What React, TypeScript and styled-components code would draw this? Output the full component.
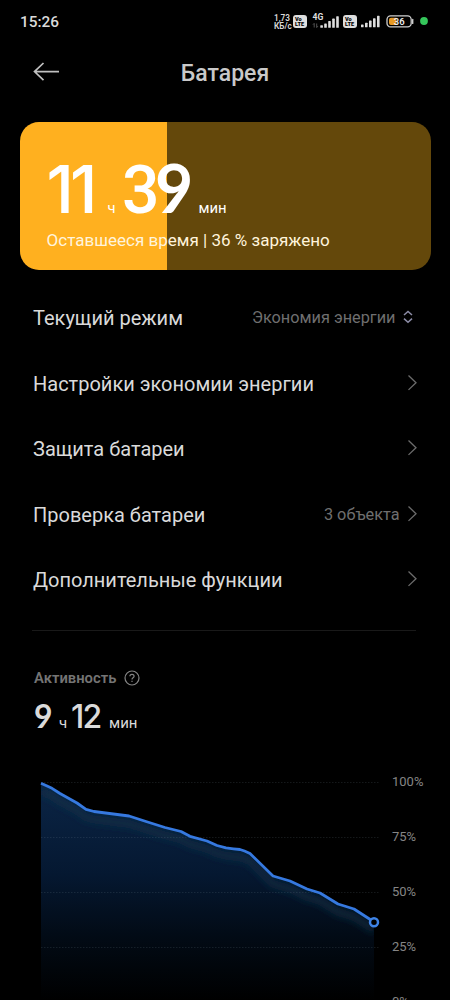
import React from 'react';
import styled, { createGlobalStyle } from 'styled-components';

const GlobalStyle = createGlobalStyle`
  * { box-sizing: border-box; }
  html, body { margin: 0; background: #000; }
  body { font-family: Roboto, 'Noto Sans', sans-serif; overflow: hidden; }
  svg { display: block; flex: none; }
`;

const Screen = styled.main`
  width: 450px;
  height: 1000px;
  overflow: hidden;
  background: #000;
  color: #dadada;
`;

const StatusBar = styled.div`
  display: flex;
  align-items: center;
  height: 43px;
  padding: 0 22px 0 20px;
`;

const Clock = styled.span`
  font-size: 15.4px;
  font-weight: 500;
  line-height: 20px;
  margin-right: auto;
`;

const Speed = styled.span`
  display: flex;
  flex-direction: column;
  width: 17px;
  margin-right: 2px;
  font-size: 8.2px;
  font-weight: 600;
  line-height: 8px;
  white-space: nowrap;
`;

const VolteBadge = styled.span`
  display: flex;
  flex-direction: column;
  justify-content: center;
  width: 14px;
  height: 13px;
  padding-left: 2px;
  border-radius: 3px;
  background: #dedede;
  color: #000;
  font-size: 5.6px;
  font-weight: 900;
  line-height: 5px;
`;

const Header = styled.header`
  display: grid;
  grid-template-columns: 32px 1fr 32px;
  align-items: center;
  height: 59px;
  padding: 0 31px;
`;

const BackIcon = styled.svg`
  margin-bottom: 2px;
`;

const Title = styled.h1`
  margin: 2px 0 0;
  text-align: center;
  font-size: 23px;
  font-weight: 500;
  line-height: 30px;
  color: #c9c9c9;
`;

const BatteryCard = styled.section`
  width: 411px;
  height: 148px;
  margin: 20px 0 0 19.5px;
  padding: 32px 0 0 27px;
  border-radius: 19px;
  background: linear-gradient(90deg, #ffb01f 147.5px, #64480b 147.5px);
  color: #fff;
`;

const Duration = styled.div<{ $height: number }>`
  display: flex;
  align-items: baseline;
  height: ${(p) => p.$height}px;
  line-height: ${(p) => p.$height}px;
  white-space: nowrap;
`;

const Digits = styled.span<{ $size: number; $width: number; $tracking: number; $weight: number }>`
  width: ${(p) => p.$width}px;
  font-family: Inter, sans-serif;
  font-size: ${(p) => p.$size}px;
  font-weight: ${(p) => p.$weight};
  letter-spacing: ${(p) => p.$tracking}px;
`;

const Three = styled.span`
  font-family: Roboto, sans-serif;
  font-weight: 500;
  line-height: 0;
`;

const Nine = styled.span`
  font-family: Lato, sans-serif;
  font-weight: 700;
  line-height: 0;
`;

const Unit = styled.span<{ $width: number; $size: number }>`
  width: ${(p) => p.$width}px;
  font-size: ${(p) => p.$size}px;
  font-weight: 400;
`;

const Remaining = styled.div`
  margin-top: 5px;
  font-size: 17.05px;
  line-height: 22px;
  color: #fff4dc;
  white-space: nowrap;
`;

const Settings = styled.div`
  padding: 15.4px 32px 0 33px;
`;

const SettingRow = styled.div`
  display: flex;
  align-items: center;
  height: 65.5px;
`;

const Label = styled.span`
  margin-right: auto;
  font-size: 20px;
  line-height: 28px;
  white-space: nowrap;
`;

const Value = styled.span<{ $gap: number }>`
  margin-right: ${(p) => p.$gap}px;
  font-size: 16.3px;
  line-height: 22px;
  color: #6f6f6f;
  white-space: nowrap;
`;

const Divider = styled.hr`
  height: 1px;
  margin: 17.1px 34px 0 32px;
  border: 0;
  background: #191919;
`;

const Activity = styled.section`
  padding: 37px 0 0 34px;
`;

const ActivityHeading = styled.div`
  display: flex;
  align-items: center;
  gap: 8px;
  height: 20px;
  margin-bottom: 14px;
  font-size: 14.8px;
  font-weight: 600;
  color: #747474;
`;

const ChartArea = styled.div`
  display: flex;
  height: 240px;
  margin-top: 42px;
`;

const Scale = styled.div`
  display: flex;
  flex-direction: column;
  padding-left: 8px;
  font-size: 13px;
  line-height: 55px;
  color: #858585;
  margin-top: -20px;
`;

const ScaleLabel = styled.span`
  height: 55px;
  flex: none;
`;

const SignalBars = () => (
  <svg width="20" height="13" viewBox="0 0 20 13" fill="#dedede">
    <rect x="0" y="9.5" width="2.6" height="2.8" rx=".6" />
    <rect x="4" y="7.7" width="2.6" height="4.6" rx=".6" />
    <rect x="8" y="5.6" width="2.6" height="6.7" rx=".6" />
    <rect x="12" y="3.3" width="2.6" height="9" rx=".6" />
    <rect x="16" y="0.8" width="2.6" height="11.5" rx=".6" />
  </svg>
);

const MobileNetwork = () => (
  <svg width="31" height="17" viewBox="0 0 31 17" fill="#dedede">
    <text x="0.5" y="7.2" fontFamily="Roboto" fontSize="8.6" fontWeight="700">4G</text>
    <path d="M2.2 14.5v-4M1 11.6l1.2-1.3M4.7 10.5v4M5.9 13.2l-1.2 1.3" stroke="#686868" strokeWidth=".8" fill="none" />
    <rect x="8.3" y="12.2" width="2.6" height="2.6" rx=".6" />
    <rect x="12.2" y="10.4" width="2.6" height="4.4" rx=".6" />
    <rect x="16.2" y="8" width="2.6" height="6.8" rx=".6" />
    <rect x="20.2" y="5.6" width="2.6" height="9.2" rx=".6" />
    <rect x="24.2" y="3.2" width="2.6" height="11.6" rx=".6" />
  </svg>
);

const BatteryIcon = () => (
  <svg width="29" height="13" viewBox="0 0 29 13">
    <rect x="1" y=".9" width="24.2" height="11" rx="3.6" fill="none" stroke="#cfcfcf" strokeWidth="1.3" />
    <path d="M5 2.7h5.5v7.4H5a2 2 0 0 1-2-2V4.7a2 2 0 0 1 2-2z" fill="#e79a25" />
    <path d="M26.7 4.4v4" stroke="#cfcfcf" strokeWidth="1.4" strokeLinecap="round" />
    <text x="7.8" y="9.7" fontFamily="Roboto" fontSize="9.4" fontWeight="600" fill="#eee">36</text>
  </svg>
);

const Volte = () => (
  <VolteBadge>
    <span>Vo</span>
    <span>LTE</span>
  </VolteBadge>
);

const IconSlot = styled.span<{ $left?: number; $right?: number; $bottom?: number }>`
  display: flex;
  margin-left: ${(p) => p.$left ?? 0}px;
  margin-right: ${(p) => p.$right ?? 0}px;
  padding-bottom: ${(p) => p.$bottom ?? 0}px;
`;

const Chevron = () => (
  <svg width="12" height="18" viewBox="0 0 12 18" fill="none" stroke="#6c6c6c" strokeWidth="1.3">
    <path d="M2.5 1.5l7.5 7.2-7.5 7.2" />
  </svg>
);

const UpDown = () => (
  <svg width="10" height="14" viewBox="0 0 10 14" fill="none" stroke="#8c8ca6" strokeWidth="1.5">
    <path d="M1 5l4-3.6L9 5M1 8.6l4 3.6 4-3.6" />
  </svg>
);

const LINE =
  'M7 9.3L18 14.3 26 19.5 43 29 52 35.3 60 37.5 95 42 112 47.5 131 53.5 147 57.5 156 62.3 173 67 183 71.5 192 73.8Q200 75 206 75.5 210 76.5 216 79.5L239 102 256 107 273 115 286 119 304 130 320 135 337 146 340 148.5';

const Chart = () => (
  <svg width="350" height="240" viewBox="0 0 350 240" fill="none">
    <defs>
      <linearGradient id="area" x1="0" y1="9" x2="0" y2="226" gradientUnits="userSpaceOnUse">
        <stop offset="0" stopColor="#0b2546" />
        <stop offset=".42" stopColor="#051831" />
        <stop offset=".7" stopColor="#020b16" />
        <stop offset="1" stopColor="#000" />
      </linearGradient>
      <clipPath id="below">
        <path d={`${LINE}V240H7z`} />
      </clipPath>
      <filter id="soft" x="-10%" y="-20%" width="120%" height="150%">
        <feGaussianBlur stdDeviation="3.5" />
      </filter>
    </defs>
    <path d={`${LINE}V240H7z`} fill="url(#area)" />
    <g clipPath="url(#below)">
      <path d={LINE} transform="translate(0 8)" stroke="#10304a" strokeOpacity=".6" strokeWidth="8" filter="url(#soft)" />
    </g>
    {[9, 64, 119, 174].map((y) => (
      <path key={y} d={`M7 ${y - 0.5}H345`} stroke="#8ba0b0" strokeOpacity=".15" strokeDasharray="1.5 1.5" />
    ))}
    <path d={LINE} stroke="#3679e0" strokeWidth="2.8" strokeLinejoin="round" />
    <circle cx="340" cy="148.3" r="4" fill="#000" stroke="#3e83e6" strokeWidth="2.5" />
  </svg>
);

const rows: { label: string; value?: string }[] = [
  { label: 'Настройки экономии энергии' },
  { label: 'Защита батареи' },
  { label: 'Проверка батареи', value: '3 объекта' },
  { label: 'Дополнительные функции' },
];

export default function App() {
  return (
    <Screen>
      <GlobalStyle />
      <StatusBar>
        <Clock>15:26</Clock>
        <Speed>
          <span>1,73</span>
          <span>КБ/с</span>
        </Speed>
        <Volte />
        <IconSlot $left={5} $bottom={1}>
          <MobileNetwork />
        </IconSlot>
        <Volte />
        <IconSlot $left={4}>
          <SignalBars />
        </IconSlot>
        <IconSlot $left={5}>
          <BatteryIcon />
        </IconSlot>
        <IconSlot $left={5} $bottom={1}>
          <svg width="8" height="8" viewBox="0 0 8 8">
            <circle cx="4" cy="4" r="3.9" fill="#35c65b" />
          </svg>
        </IconSlot>
      </StatusBar>

      <Header>
        <BackIcon width="32" height="20" viewBox="0 0 32 20" fill="none" stroke="#c0c0c0" strokeWidth="1.7">
          <path d="M12.5 1L3.5 9.6l9 8.6M3.5 9.6H28" />
        </BackIcon>
        <Title>Батарея</Title>
      </Header>

      <BatteryCard>
        <Duration $height={70}>
          <Digits $size={66} $width={61} $tracking={-4} $weight={550}>11</Digits>
          <Unit $width={14.5} $size={14.8}>ч</Unit>
          <Digits $size={66} $width={76.5} $tracking={-4.5} $weight={500}>
            <Three>3</Three>
            <Nine>9</Nine>
          </Digits>
          <Unit $width={30} $size={14.8}>мин</Unit>
        </Duration>
        <Remaining>Оставшееся время | 36 % заряжено</Remaining>
      </BatteryCard>

      <Settings>
        <SettingRow>
          <Label>Текущий режим</Label>
          <Value $gap={7.5}>Экономия энергии</Value>
          <IconSlot $right={5} $bottom={2}>
            <UpDown />
          </IconSlot>
        </SettingRow>
        {rows.map((row) => (
          <SettingRow key={row.label}>
            <Label>{row.label}</Label>
            {row.value && <Value $gap={6.5}>{row.value}</Value>}
            <IconSlot $bottom={2}>
              <Chevron />
            </IconSlot>
          </SettingRow>
        ))}
      </Settings>

      <Divider />

      <Activity>
        <ActivityHeading>
          <span>Активность</span>
          <svg width="16" height="16" viewBox="0 0 16 16" fill="none" stroke="#858585" strokeWidth="1.2">
            <circle cx="8" cy="8" r="7" />
            <path d="M5.9 6.3c0-2.7 4.2-2.7 4.2 0 0 1.5-2.1 1.5-2.1 3.1M8 10.8v1.3" />
          </svg>
        </ActivityHeading>
        <Duration $height={30}>
          <Digits $size={32} $width={25} $tracking={-2} $weight={500}>
            <Nine>9</Nine>
          </Digits>
          <Unit $width={12} $size={15}>ч</Unit>
          <Digits $size={32} $width={38} $tracking={-1.7} $weight={550}>12</Digits>
          <Unit $width={30} $size={15}>мин</Unit>
        </Duration>
        <ChartArea>
          <Chart />
          <Scale>
            {['100%', '75%', '50%', '25%', '0%'].map((t) => (
              <ScaleLabel key={t}>{t}</ScaleLabel>
            ))}
          </Scale>
        </ChartArea>
      </Activity>
    </Screen>
  );
}
